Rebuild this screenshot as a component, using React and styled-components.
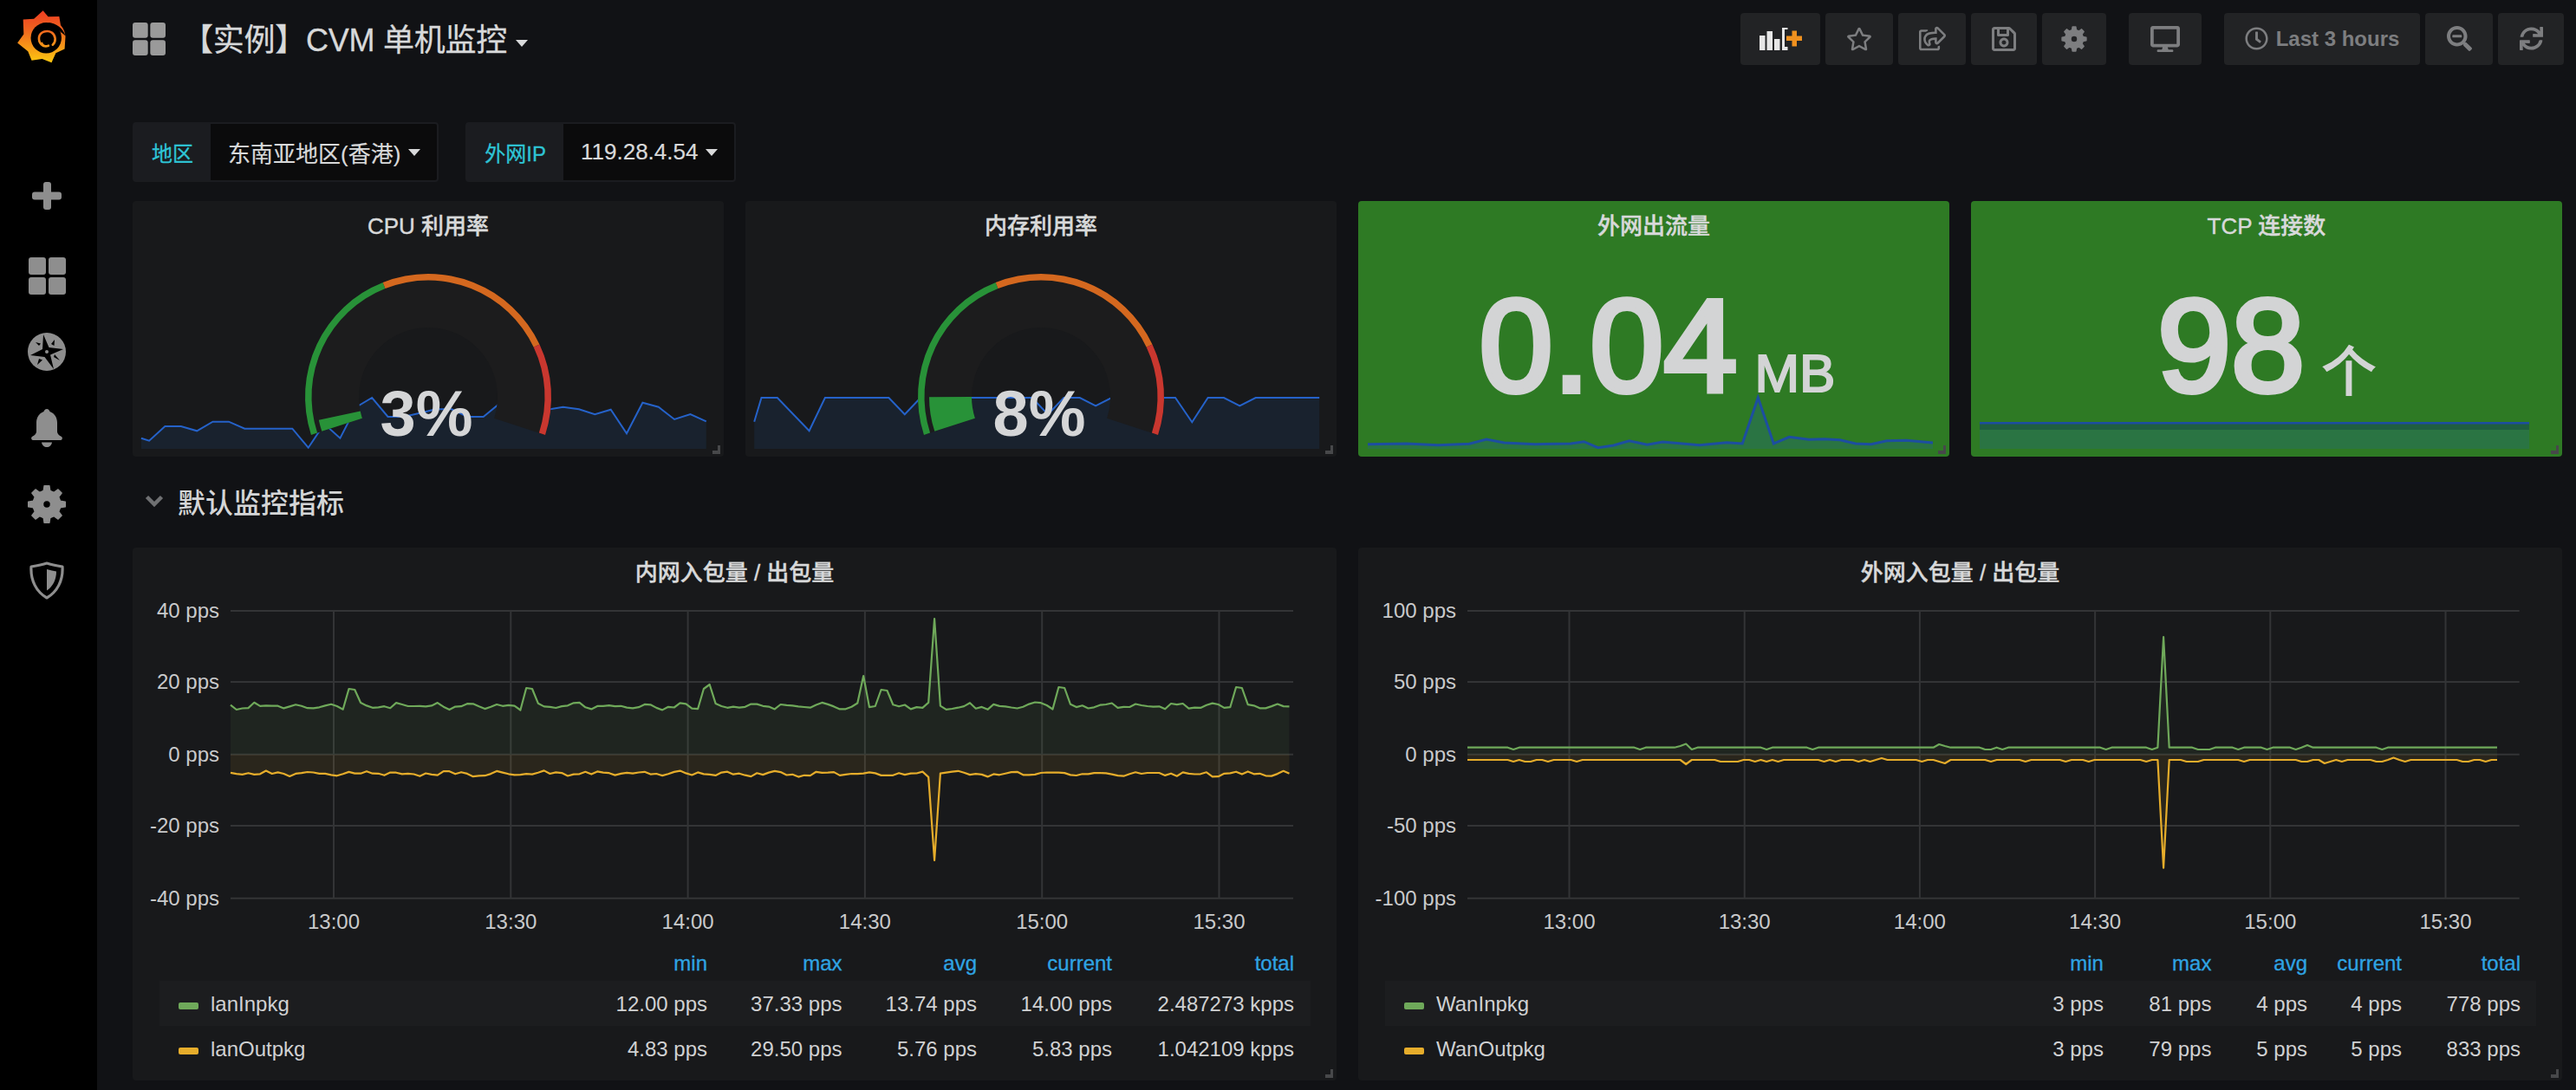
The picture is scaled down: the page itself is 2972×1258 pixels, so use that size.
import React from 'react';
import styled, { createGlobalStyle } from 'styled-components';
import { FaRegStar, FaRegShareSquare, FaRegSave, FaDesktop, FaRegClock, FaSearchMinus, FaSync } from 'react-icons/fa';

const FONT = '"Liberation Sans", "Noto Sans CJK SC", sans-serif';

const Global = createGlobalStyle`
  html, body { margin: 0; padding: 0; background: #111215; }
  body { font-family: ${FONT}; color: #d8d9da; overflow: hidden; }
`;

const Page = styled.div`
  display: flex;
  width: 2972px;
  height: 1258px;
  background: #111215;
`;
const Sidebar = styled.aside`
  width: 112px;
  flex: none;
  background: #000;
  display: flex;
  flex-direction: column;
  align-items: center;
  padding: 12px 4px 0 0;
  box-sizing: border-box;
`;
const LogoWrap = styled.div`
  margin-right: 12px;
  height: 61px;
`;
const Nav = styled.nav`
  margin-top: 109px;
  display: flex;
  flex-direction: column;
  align-items: center;
`;
const NavItem = styled.div`
  height: 88px;
  display: flex;
  align-items: center;
  justify-content: center;
  color: #8e8e8e;
  &:first-child { margin-bottom: 4px; }
`;
const Main = styled.main`
  flex: 1;
  min-width: 0;
  padding: 0 16px 0 41px;
  display: flex;
  flex-direction: column;
`;
const TopBar = styled.header`
  height: 89px;
  display: flex;
  align-items: center;
  justify-content: space-between;
  margin-right: -2px;
`;
const TitleWrap = styled.div`
  display: flex;
  align-items: center;
`;
const DashTitle = styled.h1`
  margin: 5px 0 0 19px;
  font-size: 36px;
  font-weight: 400;
  color: #d8d9da;
  line-height: 44px;
  letter-spacing: -0.25px;
  -webkit-text-stroke: 0.3px #d8d9da;
`;
const Caret = styled.span`
  display: inline-block;
  width: 0;
  height: 0;
  border-left: 7px solid transparent;
  border-right: 7px solid transparent;
  border-top: 8px solid ${p => p.$color || '#d8d9da'};
  margin-left: ${p => p.$gap || 9}px;
  margin-top: ${p => p.$top || 0}px;
`;
const Toolbar = styled.div`
  display: flex;
  gap: 26px;
`;
const ToolGroup = styled.div`
  display: flex;
  gap: 6px;
`;
const ToolButton = styled.button`
  width: ${p => p.$w}px;
  height: 60px;
  padding: 0;
  border: 0;
  border-radius: 4px;
  background: #222325;
  color: #7d7e80;
  display: flex;
  align-items: center;
  justify-content: center;
  gap: 9px;
  font-family: ${FONT};
  font-size: 24px;
  font-weight: 700;
`;
const VarRow = styled.div`
  margin-top: 52px;
  height: 69px;
  display: flex;
  gap: 31px;
`;
const VarGroup = styled.div`
  display: flex;
  border: 2px solid #1b1c20;
  border-radius: 4px;
  box-sizing: border-box;
  background: #0b0b0c;
`;
const VarLabel = styled.label`
  padding: 0 20px;
  display: flex;
  align-items: center;
  background: #1b1c20;
  color: #2ec5d6;
  font-size: 24px;
  -webkit-text-stroke: 0.3px #2ec5d6;
`;
const VarValue = styled.div`
  padding: 0 19px 0 20px;
  display: flex;
  align-items: center;
  color: #d8d9da;
  font-size: 26px;
  -webkit-text-stroke: 0.2px #d8d9da;
`;
const StatRow = styled.section`
  margin-top: 22px;
  height: 295px;
  display: grid;
  grid-template-columns: repeat(4, 1fr);
  gap: 25px;
`;
const Panel = styled.article`
  position: relative;
  border-radius: 4px;
  background: ${p => p.$bg || '#18191b'};
  overflow: hidden;
  display: flex;
  flex-direction: column;
`;
const PanelTitle = styled.h2`
  position: relative;
  margin: 0;
  height: 52px;
  flex: none;
  display: flex;
  align-items: center;
  justify-content: center;
  font-size: 26px;
  font-weight: 500;
  color: #d8d9da;
  -webkit-text-stroke: 0.4px #d8d9da;
`;
const Handle = styled.i`
  position: absolute;
  right: 4px;
  bottom: 3px;
  width: 9px;
  height: 10px;
  border-right: 3px solid #47484a;
  border-bottom: 4px solid #47484a;
  box-sizing: border-box;
`;
const GaugeSvg = styled.svg`
  display: block;
  width: 682px;
  height: 243px;
`;
const GaugeValue = styled.text`
  font-family: ${FONT};
  font-size: 74px;
  font-weight: 700;
  fill: #d5d6d7;
`;
const StatValue = styled.div`
  position: relative;
  margin-top: 38px;
  display: flex;
  align-items: baseline;
  justify-content: center;
  gap: 20px;
  line-height: 1;
  color: #d3d4d5;
  padding-left: ${p => p.$shift || 0}px;
`;
const BigNum = styled.span`
  font-size: 153px;
  font-weight: 400;
  -webkit-text-stroke: 6px #d3d4d5;
`;
const Unit = styled.span`
  font-size: 62px;
  -webkit-text-stroke: 2px #d3d4d5;
`;
const SparkOverlay = styled.svg`
  position: absolute;
  left: 0;
  top: 0;
  width: 100%;
  height: 100%;
`;
const SectionRow = styled.div`
  height: 105px;
  display: flex;
  align-items: center;
  gap: 16px;
  padding-left: 14px;
  padding-bottom: 3px;
  box-sizing: border-box;
  font-size: 32px;
  font-weight: 500;
  color: #d4d5d6;
`;
const GraphRow = styled.section`
  height: 615px;
  display: grid;
  grid-template-columns: 1fr 1fr;
  gap: 25px;
`;
const ChartSvg = styled.svg`
  display: block;
  width: 100%;
  height: 403px;
  flex: none;
`;
const AxisText = styled.text`
  font-family: ${FONT};
  font-size: 24px;
  fill: #c9cacb;
`;
const Legend = styled.div`
  margin: 0 30px 0 31px;
  display: flex;
  flex-direction: column;
`;
const LegendHead = styled.div`
  display: grid;
  grid-template-columns: ${p => p.$cols};
  height: 45px;
  align-items: center;
  padding: 5px ${p => p.$pad}px 0 22px;
  box-sizing: border-box;
  color: #2fa4e3;
  font-size: 24px;
  text-align: right;
  -webkit-text-stroke: 0.3px #2fa4e3;
`;
const LegendRow = styled.div`
  display: grid;
  grid-template-columns: ${p => p.$cols};
  height: 52px;
  align-items: center;
  padding: 2px ${p => p.$pad}px 0 22px;
  box-sizing: border-box;
  background: ${p => (p.$odd ? '#1c1d1f' : 'transparent')};
  color: #d0d1d2;
  font-size: 24px;
  text-align: right;
`;
const SeriesName = styled.div`
  display: flex;
  align-items: center;
  text-align: left;
  gap: 14px;
`;
const Swatch = styled.i`
  width: 23px;
  height: 8px;
  margin-top: 3px;
  border-radius: 2px;
  background: ${p => p.$color};
`;

/* ---------- helpers ---------- */
const rad = d => (d * Math.PI) / 180;
const pt = (cx, cy, r, a) => [cx + r * Math.cos(rad(a)), cy + r * Math.sin(rad(a))];
function sector(cx, cy, r0, r1, f0, f1) {
  const a0 = 162 + f0 * 216;
  const a1 = 162 + f1 * 216;
  const large = a1 - a0 > 180 ? 1 : 0;
  const [x0, y0] = pt(cx, cy, r1, a0);
  const [x1, y1] = pt(cx, cy, r1, a1);
  const [x2, y2] = pt(cx, cy, r0, a1);
  const [x3, y3] = pt(cx, cy, r0, a0);
  return `M${x0} ${y0}A${r1} ${r1} 0 ${large} 1 ${x1} ${y1}L${x2} ${y2}A${r0} ${r0} 0 ${large} 0 ${x3} ${y3}Z`;
}
const linePath = pts => pts.map((p, i) => `${i ? 'L' : 'M'}${p[0].toFixed(1)} ${p[1].toFixed(1)}`).join('');
const areaPath = (pts, base) =>
  `${linePath(pts)}L${pts[pts.length - 1][0].toFixed(1)} ${base}L${pts[0][0].toFixed(1)} ${base}Z`;
function gearD(cx, cy, R, r, teeth, hole) {
  let d = '';
  const step = 360 / teeth;
  for (let i = 0; i < teeth; i++) {
    const c = i * step - 90;
    const ps = [
      pt(cx, cy, r, c - step * 0.3),
      pt(cx, cy, R, c - step * 0.17),
      pt(cx, cy, R, c + step * 0.17),
      pt(cx, cy, r, c + step * 0.3),
    ];
    d += ps.map((p, j) => `${i === 0 && j === 0 ? 'M' : 'L'}${p[0].toFixed(2)} ${p[1].toFixed(2)}`).join('');
  }
  d += `ZM${cx - hole} ${cy}a${hole} ${hole} 0 1 0 ${hole * 2} 0a${hole} ${hole} 0 1 0 ${-hole * 2} 0Z`;
  return d;
}
function rng(seed) {
  let s = seed;
  return () => {
    s = (s * 1664525 + 1013904223) % 4294967296;
    return s / 4294967296;
  };
}

/* ---------- icons ---------- */
const Logo = () => (
  <svg width="56" height="61" viewBox="60 36 170 186" aria-hidden="true">
    <defs>
      <linearGradient id="lg" gradientUnits="userSpaceOnUse" x1="0" y1="40" x2="0" y2="220">
        <stop offset="0" stopColor="#ee3f22" />
        <stop offset="0.35" stopColor="#f0641f" />
        <stop offset="1" stopColor="#fcc911" />
      </linearGradient>
    </defs>
    <path
      fill="url(#lg)"
      d="M150 37L168 58L207 57L212 88Q226 104 229 127L226 172L195 186L180 220L147 207L110 212L97 180L60 150L82 120L80 68L118 66Z"
    />
    <circle cx="161" cy="133" r="54" fill="#000" />
    <path d="M168 79Q214 84 230 127Q222 118 212 112L200 100Z" fill="#000" />
    <path
      fill="none"
      stroke="url(#lg)"
      strokeWidth="8"
      strokeLinecap="round"
      d="M169 160C150 168 133 150 136 130C140 110 165 104 181 114C195 124 197 146 184 157"
    />
    <path d="M148 132C150 120 168 118 176 128C180 136 178 146 170 150C160 156 150 146 148 132Z" fill="#000" />
    <path fill="none" stroke="url(#lg)" strokeWidth="4" d="M168 160C158 166 150 160 146 148" />
  </svg>
);
const Plus = () => (
  <svg width="34" height="32" viewBox="0 0 34 32" aria-hidden="true" fill="currentColor">
    <rect x="13" y="0" width="9" height="32" rx="3" />
    <rect x="0" y="11.5" width="34" height="9" rx="3" />
  </svg>
);
const Squares = ({ size, color }) => {
  const g = size * 0.07;
  const c = (size - g) / 2;
  return (
    <svg width={size} height={size} viewBox={`0 0 ${size} ${size}`} aria-hidden="true" fill={color}>
      <rect x="0" y="0" width={c} height={c} rx="3" />
      <rect x={c + g} y="0" width={c} height={c} rx="3" />
      <rect x="0" y={c + g} width={c} height={c} rx="3" />
      <rect x={c + g} y={c + g} width={c} height={c} rx="3" />
    </svg>
  );
};
const Compass = () => (
  <svg width="44" height="44" viewBox="0 0 44 44" aria-hidden="true">
    <circle cx="22" cy="22" r="22" fill="#8e8e8e" />
    <path fill="#000" d="M18 2L24.5 17L41 19L26 25.5L30 42L19.5 28L3 26L17 19Z" />
    <path fill="#000" d="M27 13L31 8L30.5 15ZM13 15L9 11L15 12.5ZM13 30L11 37L17 31.5ZM30 28L37 32L31 25Z" />
    <circle cx="22" cy="22" r="2" fill="#8e8e8e" />
  </svg>
);
const Bell = () => (
  <svg width="36" height="44" viewBox="0 0 36 44" aria-hidden="true" fill="currentColor">
    <path d="M18 0C20 0 21 1.5 21.5 3C27 5 30 10 30 16V26C30 29 33 31 35 32C36.5 33 36 36 34 36H2C0 36 -0.5 33 1 32C3 31 6 29 6 26V16C6 10 9 5 14.5 3C15 1.5 16 0 18 0Z" />
    <path d="M12 38.5H24C23.5 42 21 44 18 44C15 44 12.5 42 12 38.5Z" />
  </svg>
);
const Gear = ({ size, R, r, hole }) => (
  <svg width={size} height={size} viewBox={`0 0 ${size} ${size}`} aria-hidden="true" fill="currentColor">
    <path fillRule="evenodd" stroke="currentColor" strokeWidth="1.5" strokeLinejoin="round" d={gearD(size / 2, size / 2, R, r, 8, hole)} />
  </svg>
);
const Shield = () => (
  <svg width="40" height="44" viewBox="0 0 40 44" aria-hidden="true">
    <path
      d="M20 2C26 4 32 5 38 6C39 22 32 35 20 42C8 35 1 22 2 6C8 5 14 4 20 2Z"
      fill="none"
      stroke="#8e8e8e"
      strokeWidth="3.2"
      strokeLinejoin="round"
    />
    <path d="M20 9C24 10 28 11 31 11.5C31 21 27 29 20 33.5Z" fill="#8e8e8e" />
  </svg>
);
const Chevron = () => (
  <svg width="22" height="14" viewBox="0 0 22 14" aria-hidden="true">
    <path d="M2.5 2.5L11 11L19.5 2.5" fill="none" stroke="#6f7072" strokeWidth="4.5" />
  </svg>
);
const AddPanel = () => (
  <svg width="49" height="26" viewBox="0 0 49 26" aria-hidden="true">
    <g fill="#e6e6e6">
      <rect x="0" y="9" width="6.5" height="17" />
      <rect x="8.5" y="4" width="6.5" height="22" />
      <rect x="17" y="13" width="6.5" height="13" />
      <rect x="26" y="0" width="6.5" height="26" />
    </g>
    <rect x="29" y="2" width="20" height="20" fill="#222325" />
    <g fill="#f0911f">
      <rect x="37.5" y="3.5" width="5.5" height="18" />
      <rect x="31" y="9.5" width="18" height="5.5" />
    </g>
  </svg>
);

/* ---------- gauges ---------- */
const z1 = [[52,857],[72,866],[112,816],[152,816],[192,832],[232,800],[272,800],[312,824],[432,824],[472,890],[512,808],[552,857],[592,750],[632,717],[672,783],[712,783],[752,770],[792,757],[832,757],[872,783],[912,783],[952,738],[992,720],[1057,762],[1112,749],[1152,757],[1192,775],[1232,758],[1272,841],[1312,734],[1352,749],[1392,792],[1432,774],[1472,799]];
const z2 = [[44,800],[62,717],[102,717],[182,832],[222,717],[382,717],[422,775],[462,717],[742,717],[782,775],[822,717],[862,717],[902,745],[942,717],[1102,717],[1144,802],[1184,717],[1224,717],[1264,745],[1304,717],[1464,717]];
const z3 = [[20,878],[70,876],[110,881],[150,877],[172,861],[195,873],[235,878],[280,876],[297,869],[315,890],[335,882],[355,866],[378,880],[398,870],[445,881],[480,872],[500,876],[520,717],[540,876],[560,853],[585,862],[605,860],[625,863],[645,876],[665,878],[685,866],[710,865],[744,873]];

const GAUGE_CX = 341;
const GAUGE_CY = 226;

const Gauge = ({ title, value, fraction, spark }) => (
  <Panel>
    <PanelTitle>{title}</PanelTitle>
    <GaugeSvg viewBox="0 52 682 243">
      <path d={areaPath(spark, 286)} fill="#19222e" />
      <path d={linePath(spark)} fill="none" stroke="#2562c9" strokeWidth="2" />
      <path d={sector(GAUGE_CX, GAUGE_CY, 80, 142, 0, 1)} fill="#1c1c1d" />
      <path d={sector(GAUGE_CX, GAUGE_CY, 134.5, 142, 0, 0.4)} fill="#289238" />
      <path d={sector(GAUGE_CX, GAUGE_CY, 134.5, 142, 0.4, 0.8)} fill="#d4681f" />
      <path d={sector(GAUGE_CX, GAUGE_CY, 134.5, 142, 0.8, 1)} fill="#c9372f" />
      <path d={sector(GAUGE_CX, GAUGE_CY, 80, 129, 0, fraction)} fill="#289238" />
      <GaugeValue x={GAUGE_CX - 2} y="271" textAnchor="middle">{value}</GaugeValue>
    </GaugeSvg>
    <Handle />
  </Panel>
);

const Stat = ({ title, value, unit, shift, children }) => (
  <Panel $bg="#2e7a24">
    <SparkOverlay viewBox="0 0 682 295">{children}</SparkOverlay>
    <PanelTitle>{title}</PanelTitle>
    <StatValue $shift={shift}>
      <BigNum>{value}</BigNum>
      <Unit>{unit}</Unit>
    </StatValue>
    <Handle />
  </Panel>
);

/* ---------- graphs ---------- */
function buildSeries(seed, x0, x1, n, fn, spikes) {
  const r = rng(seed);
  const pts = [];
  for (let i = 0; i < n; i++) {
    const x = x0 + ((x1 - x0) * i) / (n - 1);
    pts.push([x, fn(r, i)]);
  }
  spikes.forEach(([sx, sy, shoulder]) => {
    let idx = 0;
    pts.forEach((p, i) => {
      if (Math.abs(p[0] - sx) < Math.abs(pts[idx][0] - sx)) idx = i;
    });
    pts[idx][1] = sy;
    if (shoulder === 'wide') pts[idx + 1][1] = sy + 1;
    if (shoulder === 'down') pts[idx - 1][1] = pts[idx - 1][1] + (sy < pts[idx - 1][1] ? -4 : 4);
  });
  return pts;
}

const leftGreen = buildSeries(7, 266, 1487.5, 180,
  (r, i) => 815 + Math.sin(i * 1.05) * 2.2 + (r() - 0.5) * 5,
  [[405, 795, 'wide'], [609, 794, 'wide'], [820, 790], [813.5, 795], [997, 780], [1017, 796, 'wide'], [1079, 714, 'down'], [1222, 793, 'wide'], [1427, 793, 'wide']]);
const leftYellow = buildSeries(11, 266, 1487.5, 180,
  (r, i) => 893 + Math.sin(i * 0.8) * 1.6 + (r() - 0.5) * 4.5,
  [[1079, 993, 'down']]);
const rightGreen = buildSeries(3, 1693, 2881, 180,
  (r) => (r() < 0.12 ? 865 : 862.7),
  [[1945, 858.5], [1938, 861], [2238, 859], [2244, 861], [2497.6, 735], [2660, 860]]);
const rightYellow = buildSeries(5, 1693, 2881, 180,
  (r) => (r() < 0.18 ? 879 : 877),
  [[1945, 882], [2244, 881], [2174, 875], [2680, 881], [2761, 874.5], [2497.6, 1001.6]]);

const Chart = ({ ox, left, right, ys, xs, series, zero }) => {
  const oy = 632;
  const top = ys[0][0];
  const bottom = ys[ys.length - 1][0];
  return (
    <ChartSvg viewBox={`0 52 1389 403`}>
      {ys.map(([y]) => (
        <line key={y} x1={left - ox} x2={right - ox} y1={y - oy} y2={y - oy} stroke="#333436" strokeWidth="2" />
      ))}
      {xs.map(([x]) => (
        <line key={x} x1={x - ox} x2={x - ox} y1={top - oy} y2={bottom - oy} stroke="#333436" strokeWidth="2" />
      ))}
      {series.map(s => {
        const pts = s.pts.map(p => [p[0] - ox, p[1] - oy]);
        return (
          <g key={s.color}>
            <path d={areaPath(pts, zero - oy)} fill={s.color} fillOpacity="0.09" />
            <path d={linePath(pts)} fill="none" stroke={s.color} strokeWidth="2.2" strokeLinejoin="round" />
          </g>
        );
      })}
      {ys.map(([y, label]) => (
        <AxisText key={label} x={left - ox - 13} y={y - oy + 8} textAnchor="end">{label}</AxisText>
      ))}
      {xs.map(([x, label]) => (
        <AxisText key={label} x={x - ox} y={1072 - oy} textAnchor="middle">{label}</AxisText>
      ))}
    </ChartSvg>
  );
};

const GraphPanel = ({ title, chart, cols, pad, rows }) => (
  <Panel>
    <PanelTitle>{title}</PanelTitle>
    {chart}
    <Legend>
      <LegendHead $cols={cols} $pad={pad}>
        <span />
        <span>min</span><span>max</span><span>avg</span><span>current</span><span>total</span>
      </LegendHead>
      {rows.map((r, i) => (
        <LegendRow key={r.name} $cols={cols} $pad={pad} $odd={i === 0}>
          <SeriesName><Swatch $color={r.color} />{r.name}</SeriesName>
          {r.values.map((v, j) => <span key={j}>{v}</span>)}
        </LegendRow>
      ))}
    </Legend>
    <Handle />
  </Panel>
);

const GREEN = '#6fa95a';
const YELLOW = '#e6ad2b';
const sp1 = z1.map(([x, y]) => [x / 2.178 - 14, y / 3 - 12]);
const sp2 = z2.map(([x, y]) => [x / 2.178 - 10, y / 3 - 12]);
const sp3 = z3.map(([x, y]) => [x / 1.1105 - 7, y / 3 - 12]);
const labels = ['13:00', '13:30', '14:00', '14:30', '15:00', '15:30'];

export default function App() {
  return (
    <Page>
      <Global />
      <Sidebar>
        <LogoWrap><Logo /></LogoWrap>
        <Nav>
          <NavItem><Plus /></NavItem>
          <NavItem><Squares size={43} color="#8e8e8e" /></NavItem>
          <NavItem><Compass /></NavItem>
          <NavItem><Bell /></NavItem>
          <NavItem><Gear size={44} R={21.5} r={16} hole={4.5} /></NavItem>
          <NavItem><Shield /></NavItem>
        </Nav>
      </Sidebar>
      <Main>
        <TopBar>
          <TitleWrap>
            <Squares size={38} color="#9a9a9a" />
            <DashTitle>【实例】CVM 单机监控</DashTitle>
            <Caret $gap={10} $top={10} />
          </TitleWrap>
          <Toolbar>
            <ToolGroup>
              <ToolButton $w={92}><AddPanel /></ToolButton>
              <ToolButton $w={78}><FaRegStar size={30} /></ToolButton>
              <ToolButton $w={78}><FaRegShareSquare size={31} /></ToolButton>
              <ToolButton $w={76}><FaRegSave size={32} /></ToolButton>
              <ToolButton $w={74}><Gear size={30} R={14} r={10.5} hole={4} /></ToolButton>
            </ToolGroup>
            <ToolGroup>
              <ToolButton $w={84}><FaDesktop size={34} /></ToolButton>
            </ToolGroup>
            <ToolGroup>
              <ToolButton $w={226}><FaRegClock size={27} />Last 3 hours</ToolButton>
              <ToolButton $w={78}><FaSearchMinus size={29} /></ToolButton>
              <ToolButton $w={76}><FaSync size={27} /></ToolButton>
            </ToolGroup>
          </Toolbar>
        </TopBar>
        <VarRow>
          <VarGroup>
            <VarLabel>地区</VarLabel>
            <VarValue>东南亚地区(香港)<Caret /></VarValue>
          </VarGroup>
          <VarGroup>
            <VarLabel>外网IP</VarLabel>
            <VarValue>119.28.4.54<Caret /></VarValue>
          </VarGroup>
        </VarRow>
        <StatRow>
          <Gauge title="CPU 利用率" value="3%" fraction={0.028} spark={sp1} />
          <Gauge title="内存利用率" value="8%" fraction={0.083} spark={sp2} />
          <Stat title="外网出流量" value="0.04" unit="MB" shift={8}>
            <path d={areaPath(sp3, 286)} fill="#1f60c4" fillOpacity="0.2" />
            <path d={linePath(sp3)} fill="none" stroke="#1d4ea0" strokeWidth="3" />
          </Stat>
          <Stat title="TCP 连接数" value="98" unit="个" shift={0}>
            <rect x="10" y="256" width="634" height="30" fill="#1f60c4" fillOpacity="0.2" />
            <rect x="10" y="256" width="634" height="8" fill="#0b2a3a" fillOpacity="0.3" />
            <rect x="10" y="255" width="634" height="2.5" fill="#1d4ea0" />
          </Stat>
        </StatRow>
        <SectionRow><Chevron />默认监控指标</SectionRow>
        <GraphRow>
          <GraphPanel
            title="内网入包量 / 出包量"
            cols="1fr 150px 155.5px 155.5px 156px 210px"
            pad={19}
            chart={
              <Chart
                ox={153}
                left={266}
                right={1492}
                zero={870.7}
                ys={[[705, '40 pps'], [787, '20 pps'], [870.7, '0 pps'], [953, '-20 pps'], [1036.7, '-40 pps']]}
                xs={labels.map((l, i) => [385 + i * 204.3, l])}
                series={[{ color: GREEN, pts: leftGreen }, { color: YELLOW, pts: leftYellow }]}
              />
            }
            rows={[
              { name: 'lanInpkg', color: GREEN, values: ['12.00 pps', '37.33 pps', '13.74 pps', '14.00 pps', '2.487273 kpps'] },
              { name: 'lanOutpkg', color: YELLOW, values: ['4.83 pps', '29.50 pps', '5.76 pps', '5.83 pps', '1.042109 kpps'] },
            ]}
          />
          <GraphPanel
            title="外网入包量 / 出包量"
            cols="1fr 100px 124.5px 110.6px 109px 137px"
            pad={18}
            chart={
              <Chart
                ox={1567}
                left={1693}
                right={2906.7}
                zero={870.7}
                ys={[[705, '100 pps'], [787, '50 pps'], [870.7, '0 pps'], [953, '-50 pps'], [1036.7, '-100 pps']]}
                xs={labels.map((l, i) => [1810.5 + i * 202.2, l])}
                series={[{ color: GREEN, pts: rightGreen }, { color: YELLOW, pts: rightYellow }]}
              />
            }
            rows={[
              { name: 'WanInpkg', color: GREEN, values: ['3 pps', '81 pps', '4 pps', '4 pps', '778 pps'] },
              { name: 'WanOutpkg', color: YELLOW, values: ['3 pps', '79 pps', '5 pps', '5 pps', '833 pps'] },
            ]}
          />
        </GraphRow>
      </Main>
    </Page>
  );
}
